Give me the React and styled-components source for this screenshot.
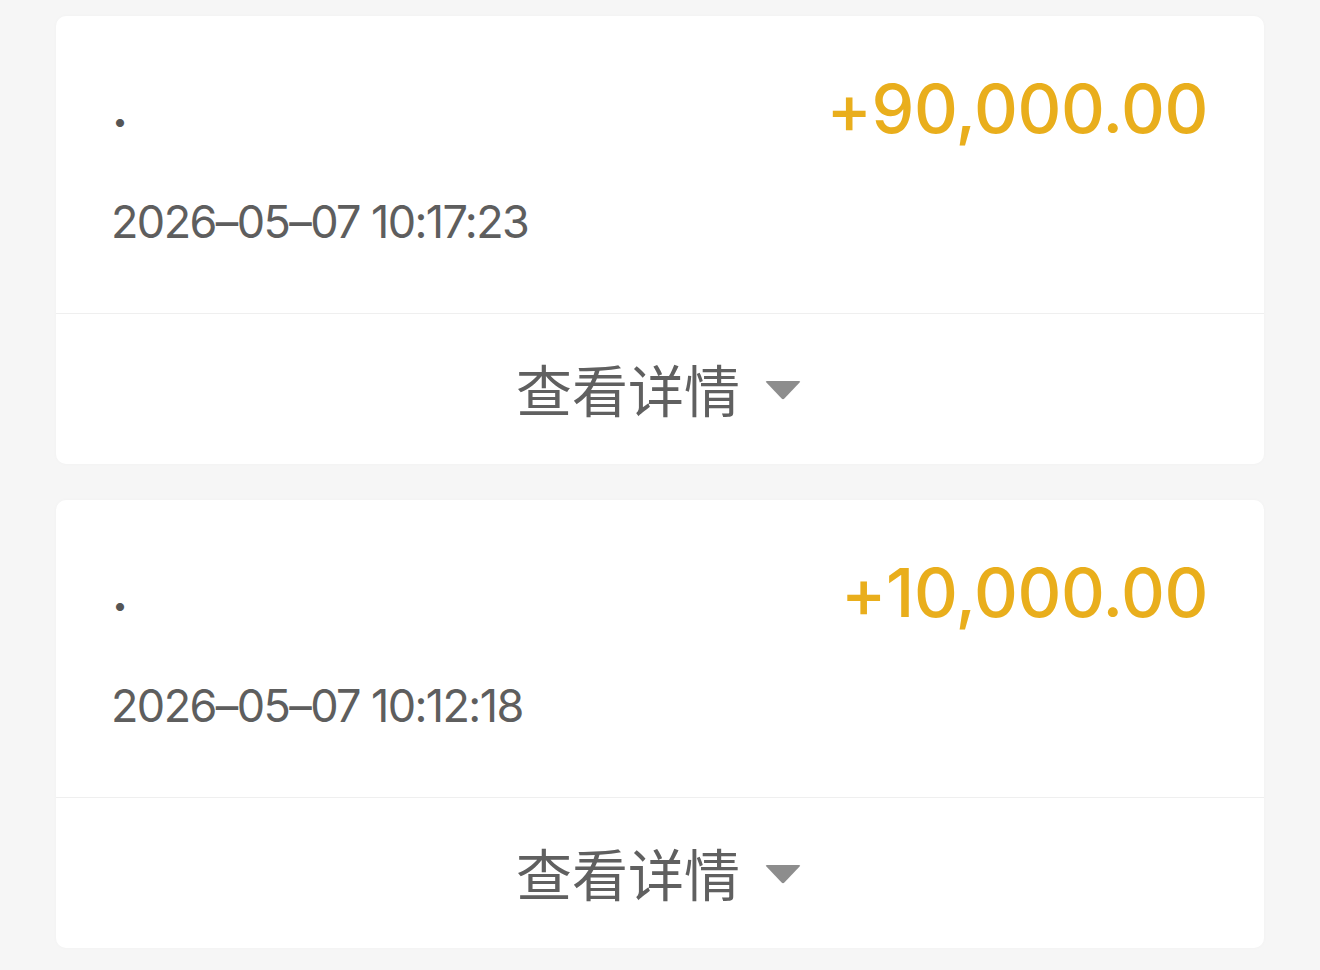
import React from "react";
import styled, { createGlobalStyle } from "styled-components";

const Global = createGlobalStyle`
  html, body { margin: 0; padding: 0; background: #f6f6f6; }
  body { font-family: Inter, "Liberation Sans", "Noto Sans CJK SC", sans-serif; }
  * { box-sizing: border-box; }
`;

const Page = styled.div`
  width: 1320px;
  min-height: 970px;
  padding: 16px 56px 0 56px;
  display: flex;
  flex-direction: column;
  gap: 36px;
`;

const Card = styled.div`
  background: #ffffff;
  border-radius: 10px;
  box-shadow: 0 0 4px rgba(0, 0, 0, 0.025);
  overflow: hidden;
`;

const Top = styled.div`
  height: 298px;
  padding: 58px 56px 0 56px;
  border-bottom: 1px solid #efefef;
  display: flex;
  flex-direction: column;
  gap: 57px;
`;

const Row = styled.div`
  display: flex;
  justify-content: space-between;
  align-items: flex-start;
`;

const Name = styled.span`
  font-size: 48px;
  line-height: 46px;
  font-weight: 700;
  margin-top: 13px;
  color: #555;
`;

const Amount = styled.span`
  font-family: Inter, sans-serif;
  font-size: 68px;
  line-height: 68px;
  font-weight: 500;
  color: #e9ae1c;
  letter-spacing: -0.4px;
`;

const Time = styled.div`
  font-family: Inter, sans-serif;
  font-size: 45px;
  line-height: 46px;
  color: #5e5e5e;
  letter-spacing: -1.6px;
  margin-left: -1px;
`;

const Footer = styled.button`
  width: 100%;
  height: 150px;
  border: 0;
  background: transparent;
  display: flex;
  align-items: center;
  justify-content: center;
  gap: 24px;
  padding: 0 0 2px 0;
  cursor: pointer;
`;

const FooterText = styled.span`
  font-family: "Noto Sans CJK SC", sans-serif;
  font-size: 56px;
  line-height: 56px;
  color: #606060;
  margin-left: -2px;
`;

const Caret = styled.svg`
  width: 38px;
  height: 22px;
  margin-top: 4px;
`;

const records = [
  { amount: "+90,000.00", time: "2026–05–07 10:17:23" },
  { amount: "+10,000.00", time: "2026–05–07 10:12:18" },
];

export default function App() {
  return (
    <>
      <Global />
      <Page>
        {records.map((r) => (
          <Card key={r.time}>
            <Top>
              <Row>
                <Name>.</Name>
                <Amount>{r.amount}</Amount>
              </Row>
              <Time>{r.time}</Time>
            </Top>
            <Footer>
              <FooterText>查看详情</FooterText>
              <Caret viewBox="0 0 38 22">
                <path
                  d="M3 2 H35 Q37 2 35.6 3.6 L20.4 19.6 Q19 21 17.6 19.6 L2.4 3.6 Q1 2 3 2 Z"
                  fill="#8d8d8d"
                />
              </Caret>
            </Footer>
          </Card>
        ))}
      </Page>
    </>
  );
}
